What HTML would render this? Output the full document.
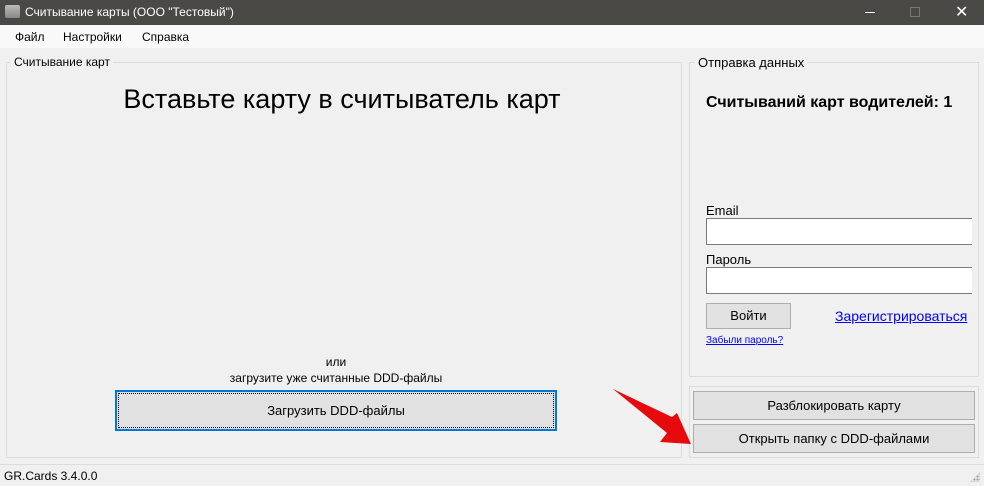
<!DOCTYPE html>
<html><head><meta charset="utf-8"><style>
*{margin:0;padding:0;box-sizing:border-box}
body{width:984px;height:486px;background:#f0f0f0;font-family:"Liberation Sans","Noto Sans CJK SC",sans-serif;font-size:12px;color:#000;position:relative;overflow:hidden}
.abs{position:absolute}
.title{left:0;top:0;width:984px;height:25px;background:#4b4946;color:#fff;font-size:12px}
.menu{left:0;top:25px;width:984px;height:23px;background:#f9f9f9}
.gb{border:1px solid #dcdcdc}
.lbl{background:#f0f0f0;padding:0 3px;font-size:12px}
.btn{background:#e1e1e1;border:1px solid #adadad;text-align:center;font-size:13px}
.inp{background:#fff;border:1px solid #7a7a7a;border-right:none}
a{color:#00f;text-decoration:underline}
</style></head><body>
<div class="abs title">
 <div class="abs" style="left:5px;top:5px;width:15px;height:13px;background:linear-gradient(#bbb,#888);border-radius:2px"></div>
 <div class="abs" style="left:25px;top:5px">Считывание карты (ООО "Тестовый")</div>
 <div class="abs" style="left:865px;top:12px;width:10px;height:1px;background:#fff"></div>
 <div class="abs" style="left:910px;top:7px;width:10px;height:10px;border:1px solid #777"></div>
 <div class="abs" style="left:955px;top:2px;font-size:16px;color:#fff">✕</div>
</div>
<div class="abs menu">
 <span class="abs" style="left:15px;top:5px">Файл</span>
 <span class="abs" style="left:63px;top:5px">Настройки</span>
 <span class="abs" style="left:142px;top:5px">Справка</span>
</div>
<div class="abs gb" style="left:6px;top:62px;width:676px;height:396px"></div>
<div class="abs lbl" style="left:11px;top:55px">Считывание карт</div>
<div class="abs" style="left:4px;top:84px;width:676px;text-align:center;font-size:27px">Вставьте карту в считыватель карт</div>
<div class="abs" style="left:6px;top:354px;width:660px;text-align:center;font-size:12px;line-height:16px">или<br>загрузите уже считанные DDD-файлы</div>
<div class="abs btn" style="left:115px;top:390px;width:442px;height:41px;border:2px solid #0078d7;line-height:37px;outline:1px dotted #000;outline-offset:-4px">Загрузить DDD-файлы</div>

<div class="abs gb" style="left:689px;top:62px;width:290px;height:315px"></div>
<div class="abs lbl" style="left:695px;top:55px;font-size:13px">Отправка данных</div>
<div class="abs" style="left:706px;top:94px;font-weight:bold;font-size:16px;white-space:nowrap">Считываний карт водителей: 1</div>
<div class="abs" style="left:706px;top:203px;font-size:13px">Email</div>
<div class="abs inp" style="left:706px;top:218px;width:266px;height:27px"></div>
<div class="abs" style="left:706px;top:252px;font-size:13px">Пароль</div>
<div class="abs inp" style="left:706px;top:267px;width:266px;height:27px"></div>
<div class="abs btn" style="left:706px;top:303px;width:85px;height:26px;line-height:24px">Войти</div>
<a class="abs" style="left:835px;top:308px;font-size:14px">Зарегистрироваться</a>
<a class="abs" style="left:706px;top:335px;font-size:10px">Забыли пароль?</a>

<div class="abs gb" style="left:689px;top:386px;width:290px;height:72px"></div>
<div class="abs btn" style="left:693px;top:391px;width:282px;height:29px;line-height:28px">Разблокировать карту</div>
<div class="abs btn" style="left:693px;top:424px;width:282px;height:29px;line-height:28px">Открыть папку с DDD-файлами</div>

<svg class="abs" style="left:600px;top:380px" width="100" height="70"><polygon points="13,9 72,37 77,33 91,64 60,62 67,53" fill="#e60a0c"/></svg>

<div class="abs" style="left:0;top:464px;width:984px;height:1px;background:#dcdcdc"></div>
<div class="abs" style="left:4px;top:469px">GR.Cards 3.4.0.0</div>
<div class="abs" style="left:970px;top:472px;width:10px;height:10px;background:radial-gradient(circle,#999 1px,transparent 1.2px) 0 0/3px 3px;clip-path:polygon(100% 0,100% 100%,0 100%)"></div>
</body></html>
